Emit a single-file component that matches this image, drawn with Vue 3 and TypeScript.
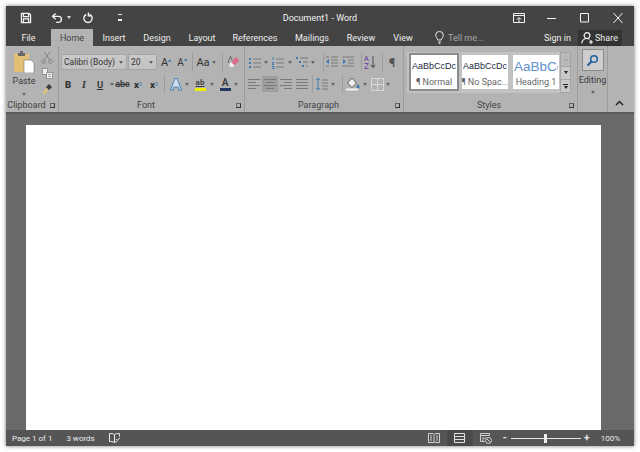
<script setup lang="ts">
const tabs = ['Insert', 'Design', 'Layout', 'References', 'Mailings', 'Review', 'View']

// one line of an align icon: start and end x
const aligns = [
  { name: 'left', on: false, lines: [[2, 14], [2, 10], [2, 14], [2, 10]] },
  { name: 'center', on: true, lines: [[2, 14], [4, 12], [2, 14], [4, 12]] },
  { name: 'right', on: false, lines: [[2, 14], [6, 14], [2, 14], [6, 14]] },
  { name: 'justify', on: false, lines: [[2, 14], [2, 14], [2, 14], [2, 14]] },
]

const styles = [
  { name: 'Normal', label: '¶ Normal', sample: 'AaBbCcDc', heading: false },
  { name: 'nospace', label: '¶ No Spac...', sample: 'AaBbCcDc', heading: false },
  { name: 'heading', label: 'Heading 1', sample: 'AaBbCc', heading: true },
]
</script>

<template>
  <div class="window">
    <header class="titlebar">
      <div class="qat">
        <svg class="save" width="12" height="12" viewBox="0 0 14 14" fill="none" stroke="#f2f2f2" stroke-width="1.500">
          <path d="M1.700 1.700h9l1.600 1.600v9H1.700z" />
          <path d="M4 2v3.500h6V2M4 12.200V8h6v4.200" />
        </svg>
        <svg class="undo" width="12" height="12" viewBox="0 0 13 12" fill="none" stroke="#f2f2f2" stroke-width="1.500">
          <path d="M5 1 1.700 4.200 5 7.400M2 4.200h6a3.200 3.200 0 0 1 0 6.600H5.500" />
        </svg>
        <span class="caret caret--light undo-drop"></span>
        <svg class="redo" width="12" height="12" viewBox="0 0 13 13" fill="none" stroke="#f2f2f2" stroke-width="1.500">
          <path d="M8.300 2.700a4.500 4.500 0 1 1-3.600 0" />
          <path d="M7 .6v3.400h3.400" />
        </svg>
        <span class="customize"></span>
      </div>
      <div class="doc-title">Document1 - Word</div>
      <div class="win-controls">
        <svg width="12" height="10" viewBox="0 0 12 10" fill="none" stroke="#f2f2f2">
          <path d="M.5.500h11v9H.5zM.5 2.500h11M6 9V5M4 6.500l2-2 2 2" />
        </svg>
        <svg width="12" height="10" viewBox="0 0 12 10" stroke="#f2f2f2"><path d="M1 5.500h9" /></svg>
        <svg width="12" height="10" viewBox="0 0 12 10" fill="none" stroke="#f2f2f2"><path d="M1.500.500h8v8.500h-8z" /></svg>
        <svg width="12" height="10" viewBox="0 0 12 10" fill="none" stroke="#f2f2f2"><path d="M1.500 0l9 10M10.500 0l-9 10" /></svg>
      </div>
    </header>

    <nav class="tabs">
      <span class="tab tab--file">File</span>
      <span class="tab tab--home">Home</span>
      <span v-for="tab in tabs" :key="tab" class="tab" :class="'tab--' + tab.toLowerCase()">{{ tab }}</span>
      <svg class="bulb" width="9" height="13" viewBox="0 0 9 13" fill="none" stroke="#e6e6e6">
        <path d="M2.800 9C2.500 7 .7 6.500.7 4.200a3.800 3.800 0 0 1 7.600 0C8.300 6.500 6.500 7 6.200 9zM3 11h3M3.800 12.500h1.400" />
      </svg>
      <span class="tell">Tell me...</span>
      <span class="signin">Sign in</span>
      <span class="share">
        <svg width="12" height="12" viewBox="0 0 12 12" fill="none" stroke="#f5f5f5" stroke-width="1.200">
          <circle cx="6" cy="3.600" r="2.900" />
          <path d="M.7 11.500c.4-3 2.400-5 5.300-5 1 0 1.800.3 2.500.7M8 10h4M10 8v4" />
        </svg>
        Share
      </span>
    </nav>

    <section class="ribbon">
      <div class="group group--clipboard">
        <div class="group__body clip">
          <div class="paste">
            <svg width="22" height="22" viewBox="0 0 22 22">
              <path d="M1 3h15v18H1z" fill="#e3bf73" />
              <path d="M5 2h7v3H5z" fill="#666" />
              <path d="M7 0h3v3H7z" fill="#666" />
              <path d="M11 9h7l3 3v10H11z" fill="#fff" stroke="#777" stroke-width=".6" />
            </svg>
            <span class="paste__label">Paste</span>
            <span class="caret"></span>
          </div>
          <div class="clip__small">
            <svg width="12" height="13" viewBox="0 0 12 13" fill="none" stroke="#858585">
              <path d="M3 1l6 8M9 1 3 9" />
              <circle cx="2.500" cy="10.500" r="1.800" />
              <circle cx="9.500" cy="10.500" r="1.800" />
            </svg>
            <svg width="11" height="11" viewBox="0 0 11 11" fill="#f1f1f1" stroke="#7a7a7a" stroke-width=".7">
              <path d="M.5.500h5v6h-5z" />
              <path d="M4.500 4.500h6v6h-6z" />
              <path d="M6 6.500h3M6 8.500h3" />
            </svg>
            <svg width="12" height="12" viewBox="0 0 12 12">
              <path d="M5 4 8 1l3 3-3 3z" fill="#3c3c3c" />
              <path d="M5.500 5 7 7 5 10 1 11z" fill="#e3bf73" />
            </svg>
          </div>
        </div>
        <div class="group__label"><span>Clipboard</span><i class="launcher"></i></div>
      </div>

      <div class="group group--font">
        <div class="group__body">
          <div class="row">
            <div class="combo combo--family"><span>Calibri (Body)</span><i class="caret"></i></div>
            <div class="combo combo--size"><span>20</span><i class="caret"></i></div>
            <span class="tool tool--text ml1">A<sup class="tick">▴</sup></span>
            <span class="tool tool--text tool--small">A<sup class="tick">▾</sup></span>
            <span class="sep ml2"></span>
            <span class="tool tool--text ml2">Aa</span>
            <span class="caret-cell"><i class="caret"></i></span>
            <span class="sep ml5"></span>
            <span class="tool ml2 tool--wide">
              <svg width="14" height="14" viewBox="0 0 14 14">
                <path d="M5 7l5-5 3.500 3.500-5 5z" fill="#d9708a" />
                <path d="M5 7l3.500 3.500L7 12H4.500L3 10.500z" fill="#eee" />
                <path d="M2 8 4.500 1 6 5" fill="none" stroke="#666" />
              </svg>
            </span>
          </div>
          <div class="row">
            <span class="tool tool--fmt"><b>B</b></span>
            <span class="tool tool--fmt"><i class="serif-i">I</i></span>
            <span class="tool tool--fmt"><u>U</u></span>
            <span class="caret-cell ml1"><i class="caret"></i></span>
            <span class="tool tool--abc"><s>abc</s></span>
            <span class="tool tool--fmt"><b>x</b><sub class="script">2</sub></span>
            <span class="tool tool--fmt"><b>x</b><sup class="script">2</sup></span>
            <span class="sep ml2"></span>
            <span class="tool ml3">
              <svg width="14" height="14" viewBox="0 0 14 14" fill="#cfdff0" stroke="#5a86b5" stroke-width="1.100">
                <path d="M5.800 1.500h2.400L12.500 13H10L9 10H5l-1 3H1.500z" />
              </svg>
            </span>
            <span class="caret-cell"><i class="caret"></i></span>
            <span class="tool ml2 mark">
              <span class="mark__text">ab</span>
              <span class="mark__bar mark__bar--yellow"></span>
            </span>
            <span class="caret-cell ml1"><i class="caret"></i></span>
            <span class="tool ml2 mark">
              <span class="mark__text mark__text--a">A</span>
              <span class="mark__bar mark__bar--navy"></span>
            </span>
            <span class="caret-cell"><i class="caret"></i></span>
          </div>
        </div>
        <div class="group__label"><span>Font</span><i class="launcher"></i></div>
      </div>

      <div class="group group--paragraph">
        <div class="group__body">
          <div class="row">
            <span class="tool">
              <svg width="14" height="13" viewBox="0 0 14 13">
                <path d="M1 2h2v2H1zM1 6h2v2H1zM1 10h2v2H1z" fill="#3f78b3" />
                <path d="M5 3h8M5 7h8M5 11h8" stroke="#7a7a7a" />
              </svg>
            </span>
            <span class="caret-cell"><i class="caret"></i></span>
            <span class="tool ml1">
              <svg width="14" height="13" viewBox="0 0 14 13">
                <path d="M2 1v3M1 6.500h2l-2 2h2M1 10.500h2v2H1" fill="none" stroke="#3f78b3" />
                <path d="M5 3h8M5 7h8M5 11h8" stroke="#7a7a7a" />
              </svg>
            </span>
            <span class="caret-cell ml1"><i class="caret"></i></span>
            <span class="tool ml1">
              <svg width="14" height="13" viewBox="0 0 14 13">
                <path d="M1 1h2v2H1zM4 5h2v2H4zM7 9h2v2H7z" fill="#3f78b3" />
                <path d="M5 2h8M8 6h5M11 10h2" stroke="#7a7a7a" />
              </svg>
            </span>
            <span class="caret-cell"><i class="caret"></i></span>
            <span class="sep ml7"></span>
            <span class="tool">
              <svg width="14" height="12" viewBox="0 0 14 12">
                <path d="M6 1h7M6 4h7M6 7h7M6 10h7M1 1h3M1 10h3" stroke="#7a7a7a" />
                <path d="M1 5.500 4 3v5z" fill="#3f78b3" />
              </svg>
            </span>
            <span class="tool">
              <svg width="14" height="12" viewBox="0 0 14 12">
                <path d="M1 1h12M7 4h6M7 7h6M1 10h12" stroke="#7a7a7a" />
                <path d="M5 5.500 2 3v5z" fill="#3f78b3" />
              </svg>
            </span>
            <span class="sep ml5"></span>
            <span class="tool">
              <svg width="14" height="14" viewBox="0 0 14 14" fill="none">
                <path d="M1.500 6 3.500 1l2 5M2.200 4.300h2.600" stroke="#7a4ea3" />
                <path d="M1.500 8.500h4l-4 5h4" stroke="#7a4ea3" />
                <path d="M10 1v11M7.800 10l2.200 2.500 2.200-2.500" stroke="#555" stroke-width="1.100" />
              </svg>
            </span>
            <span class="sep ml4"></span>
            <span class="tool ml1 pilcrow">¶</span>
          </div>
          <div class="row row--aligns">
            <span v-for="a in aligns" :key="a.name" class="tool" :class="{ 'tool--on': a.on }">
              <svg width="14" height="12" viewBox="1 0 14 12" stroke="#7a7a7a">
                <path v-for="(l, i) in a.lines" :key="i" :d="`M${l[0]} ${i * 3 + 1.500}H${l[1]}`" />
              </svg>
            </span>
            <span class="sep ml2"></span>
            <span class="tool ml1">
              <svg width="14" height="14" viewBox="0 0 14 14" fill="none">
                <path d="M3 1v12M1 3l2-2 2 2M1 11l2 2 2-2" stroke="#3f78b3" />
                <path d="M7 3h6M7 6h6M7 9h6M7 12h6" stroke="#7a7a7a" />
              </svg>
            </span>
            <span class="caret-cell"><i class="caret"></i></span>
            <span class="sep ml6"></span>
            <span class="tool ml2">
              <svg width="15" height="14" viewBox="0 0 15 14">
                <path d="M6 1 1.500 6 6 10.500 10.500 6z" fill="#f1f1f1" stroke="#555" />
                <path d="M12 7c1 1.500 1.500 2 1.500 2.800a1.500 1.500 0 0 1-3 0c0-.8.500-1.300 1.500-2.800z" fill="#3f78b3" />
                <path d="M0 12.500h12" stroke="#f1f1f1" stroke-width="2" />
              </svg>
            </span>
            <span class="caret-cell ml1"><i class="caret"></i></span>
            <span class="tool ml1">
              <svg width="13" height="13" viewBox="0 0 13 13" fill="none" stroke="#e6e6e6" stroke-dasharray="2 1">
                <path d="M.5.500h12v12H.5zM6.500.500v12M.5 6.500h12" />
              </svg>
            </span>
            <span class="caret-cell"><i class="caret"></i></span>
          </div>
        </div>
        <div class="group__label"><span>Paragraph</span><i class="launcher"></i></div>
      </div>

      <div class="group group--styles">
        <div class="group__body">
          <div class="gallery">
            <div class="gallery__items">
              <div
                v-for="(s, i) in styles"
                :key="s.name"
                class="style"
                :class="{ 'style--on': i === 0 }"
              >
                <span class="style__sample" :class="{ 'style__sample--heading': s.heading }">{{ s.sample }}</span>
                <span class="style__label">{{ s.label }}</span>
              </div>
            </div>
            <div class="gallery__scroll">
              <span class="scroll-btn scroll-btn--up"><i class="caret caret--up"></i></span>
              <span class="scroll-btn"><i class="caret caret--dark"></i></span>
              <span class="scroll-btn scroll-btn--more"><i class="more-line"></i><i class="caret caret--dark"></i></span>
            </div>
          </div>
        </div>
        <div class="group__label"><span>Styles</span><i class="launcher"></i></div>
      </div>

      <div class="group group--editing">
        <div class="find">
          <svg width="13" height="13" viewBox="0 0 13 13" fill="none" stroke="#1f5e9e" stroke-width="1.500">
            <circle cx="8" cy="5" r="3.300" />
            <path d="M5.500 7.500 1.500 11.500" stroke-width="2" />
          </svg>
        </div>
        <span class="editing__label">Editing</span>
        <span class="caret"></span>
      </div>

      <div class="collapse">
        <svg width="9" height="6" viewBox="0 0 9 6" fill="none" stroke="#222" stroke-width="1.500">
          <path d="M1 5l3.500-3.500L8 5" />
        </svg>
      </div>
    </section>

    <main class="workspace">
      <div class="page"></div>
    </main>

    <footer class="statusbar">
      <span class="status-text">Page 1 of 1</span>
      <span class="status-text words">3 words</span>
      <svg class="proof" width="11" height="10" viewBox="0 0 11 10" fill="none" stroke="#ececec">
        <path d="M5.500 1.500C4.500.7 2 .5.500.5v8c1.500 0 4 .2 5 1 .6-.5 1.500-.8 2.500-.9M5.500 1.500v8M5.500 1.500C6.500.7 9 .5 10.500.5v3M7 6l1.500 1.500 2.500-3" />
      </svg>
      <div class="views">
        <svg width="12" height="10" viewBox="0 0 12 10" fill="none" stroke="#d0d0d0">
          <path d="M.5.500h4.500l1 1 1-1h4.500v9H7l-1-.5-1 .5H.5zM6 1.500V9M2 3h2M2 5h2M2 7h2M8 3h2M8 5h2M8 7h2" />
        </svg>
        <span class="view view--on">
          <svg width="11" height="10" viewBox="0 0 11 10" fill="none" stroke="#e0e0e0">
            <path d="M.5.500h10v9H.5zM.5 3.500h10M.5 6.500h10" />
          </svg>
        </span>
        <svg width="12" height="11" viewBox="0 0 12 11" fill="none" stroke="#d0d0d0">
          <path d="M.5.500h9v2h-9zM.5 2.500v6h4M2 5h4M2 7h2" />
          <circle cx="8.500" cy="7.500" r="3" />
          <path d="M6.500 5.500l4 4" />
        </svg>
      </div>
      <div class="zoom">
        <span class="zoom__btn">-</span>
        <div class="slider"><i class="slider__thumb"></i></div>
        <span class="zoom__btn">+</span>
      </div>
      <span class="status-text percent">100%</span>
    </footer>
  </div>
</template>

<style>
html,
body {
  margin: 0;
  background: #fff;
}
</style>

<style scoped>
.window {
  width: 628px;
  height: 440px;
  margin: 6px;
  display: flex;
  flex-direction: column;
  font-family: Roboto, 'Liberation Sans', sans-serif;
  font-size: 9px;
  color: #3c3c3c;
  box-shadow: 0 0 4px rgba(0, 0, 0, 0.55);
  overflow: hidden;
}

/* title bar */
.titlebar {
  height: 23px;
  background: #444;
  display: flex;
  align-items: center;
  position: relative;
  flex: none;
}
.qat {
  display: flex;
  align-items: center;
  width: 240px;
}
.save {
  margin-left: 14px;
}
.undo {
  margin-left: 19px;
}
.undo-drop {
  margin-left: 4px;
}
.redo {
  margin-left: 11px;
}
.customize {
  width: 4px;
  height: 4px;
  margin-left: 24px;
  border-top: 1px solid #eee;
  border-bottom: 2px solid #eee;
}
.doc-title {
  width: 148px;
  text-align: center;
  color: #f2f2f2;
  font-size: 9px;
}
.win-controls {
  display: flex;
  align-items: center;
  gap: 21px;
  margin-left: 119px;
}

/* tabs */
.tabs {
  height: 17px;
  background: #444;
  display: flex;
  align-items: stretch;
  position: relative;
  flex: none;
  color: #eee;
}
.tab {
  display: flex;
  align-items: center;
  justify-content: center;
  flex: none;
}
.tab--file {
  width: 45px;
}
.tab--home {
  width: 42px;
  background: #b3b3b3;
  color: #444;
}
.tab--insert {
  width: 42px;
}
.tab--design {
  width: 44px;
}
.tab--layout {
  width: 46px;
}
.tab--references {
  width: 60px;
}
.tab--mailings {
  width: 54px;
}
.tab--review {
  width: 44px;
}
.tab--view {
  width: 40px;
}
.bulb {
  margin: 2px 0 0 12px;
}
.tell {
  margin-left: 4px;
  width: 96px;
  align-self: center;
  color: #a6a6a6;
}
.signin {
  align-self: center;
  width: 34px;
}
.share {
  display: flex;
  align-items: center;
  gap: 2px;
  width: 44px;
  margin: 1px 0 0 0;
  padding-left: 3px;
  box-sizing: border-box;
  background: #333;
}

/* ribbon */
.ribbon {
  height: 68px;
  display: flex;
  flex: none;
  background: #b3b3b3;
  border-bottom: 2px solid #5a5a5a;
  box-sizing: border-box;
}
.group {
  height: 100%;
  flex: none;
  display: flex;
  flex-direction: column;
  box-sizing: border-box;
  border-right: 1px solid #9c9c9c;
}
.group--clipboard {
  width: 53px;
}
.group--font {
  width: 186px;
}
.group--paragraph {
  width: 159px;
}
.group--styles {
  width: 174px;
}
.group--editing {
  width: 30px;
  align-items: center;
}
.group__body {
  height: 53px;
  padding-top: 5px;
  box-sizing: border-box;
  flex: none;
}
.group__label {
  display: flex;
  align-items: center;
  height: 12px;
  color: #444;
}
.group__label > span {
  flex: 1;
  text-align: center;
}
.group--styles .group__label {
  padding-left: 8px;
}
.launcher {
  width: 5px;
  height: 5px;
  margin: 0 3px;
  border-left: 1px solid #666;
  border-top: 1px solid #666;
  border-bottom: 1px solid #333;
  border-right: 1px solid #333;
  box-sizing: border-box;
  flex: none;
}
.row {
  display: flex;
  align-items: center;
  height: 22px;
  padding-left: 1px;
}
.group--paragraph .row {
  padding-left: 2px;
}
.group--paragraph .row--aligns {
  padding-left: 1px;
}
.tool {
  width: 16px;
  height: 16px;
  display: flex;
  align-items: center;
  justify-content: center;
  flex: none;
}
.tool--on {
  background: #9e9e9e;
}
.tool--text {
  font-size: 11px;
  color: #333;
}
.tool--small {
  font-size: 10px;
}
.tool--fmt {
  font-size: 9.500px;
  color: #333;
  font-weight: 600;
}
.tool--abc {
  width: 15px;
  font-size: 9px;
  font-weight: 600;
}
.tool--wide {
  margin-left: 3px;
}
.serif-i {
  font-family: 'Liberation Serif', serif;
  font-weight: 700;
  font-size: 10px;
}
.tick {
  font-size: 6px;
  line-height: 1;
  color: #3f78b3;
  margin-bottom: 5px;
}
.script {
  font-size: 5px;
  color: #4f7fb0;
  line-height: 1;
}
.pilcrow {
  font-size: 13px;
  font-weight: 700;
  color: #555;
}
.caret {
  display: block;
  width: 0;
  height: 0;
  border-left: 2.500px solid transparent;
  border-right: 2.500px solid transparent;
  border-top: 3px solid #666;
}
.caret--light {
  border-top-color: #ddd;
}
.caret--dark {
  border-top-color: #222;
}
.caret--up {
  border-top: 0;
  border-bottom: 3px solid #a5a5a5;
}
.caret-cell {
  width: 6px;
  display: flex;
  justify-content: center;
  flex: none;
}
.sep {
  width: 1px;
  height: 18px;
  background: #9c9c9c;
  flex: none;
}
.ml1 {
  margin-left: 1px;
}
.ml2 {
  margin-left: 2px;
}
.ml3 {
  margin-left: 3px;
}
.ml4 {
  margin-left: 4px;
}
.ml5 {
  margin-left: 5px;
}
.ml6 {
  margin-left: 6px;
}
.ml7 {
  margin-left: 7px;
}

/* clipboard */
.clip {
  display: flex;
}
.paste {
  width: 32px;
  margin-left: 2px;
  display: flex;
  flex-direction: column;
  align-items: center;
}
.paste__label {
  margin: 2px 0 6px;
  line-height: 12px;
  font-size: 9px;
}
.clip__small {
  width: 14px;
  display: flex;
  flex-direction: column;
  align-items: center;
  gap: 4px;
}

/* font */
.combo {
  height: 16px;
  box-sizing: border-box;
  display: flex;
  align-items: center;
  justify-content: space-between;
  padding: 0 3px 0 2px;
  background: linear-gradient(#c9c9c9, #c2c2c2);
  border: 1px solid #a5a5a5;
  color: #333;
  font-size: 8.500px;
}
.combo--family {
  width: 66px;
  margin-left: 1px;
}
.combo--size {
  width: 29px;
  margin-left: 1px;
}
.mark {
  position: relative;
  flex-direction: column;
}
.mark__text {
  font-size: 8px;
  line-height: 10px;
  font-weight: 600;
  text-decoration: underline;
}
.mark__text--a {
  font-size: 10px;
  text-decoration: none;
}
.mark__bar {
  width: 11px;
  height: 3px;
}
.mark__bar--yellow {
  background: #f0ee00;
}
.mark__bar--navy {
  background: #1f3864;
}

/* styles gallery */
.gallery {
  width: 164px;
  height: 41px;
  margin-left: 3px;
  margin-top: 1px;
  box-sizing: border-box;
  background: #c2c2c2;
  display: flex;
  justify-content: space-between;
}
.gallery__items {
  display: flex;
  gap: 5px;
  padding: 3px 0 0 4px;
}
.style {
  width: 46px;
  height: 34px;
  background: #fff;
  display: flex;
  flex-direction: column;
  align-items: center;
  overflow: hidden;
  box-sizing: border-box;
}
.style--on {
  outline: 2px solid #8c8c8c;
}
.style__sample {
  height: 22px;
  width: 44px;
  display: flex;
  align-items: center;
  justify-content: center;
  overflow: hidden;
  white-space: nowrap;
  font-family: 'Liberation Sans', sans-serif;
  font-size: 9px;
  color: #1c2a44;
}
.style__sample--heading {
  justify-content: flex-start;
  font-size: 13.500px;
  color: #5f90cf;
}
.style__label {
  color: #666;
  line-height: 11px;
  white-space: nowrap;
}
.gallery__scroll {
  width: 11px;
  display: flex;
  flex-direction: column;
}
.scroll-btn {
  height: 13.670px;
  background: #c9c9c9;
  border: 1px solid #a5a5a5;
  border-bottom: 0;
  box-sizing: border-box;
  display: flex;
  flex-direction: column;
  align-items: center;
  justify-content: center;
}
.scroll-btn--up {
  background: #b9b9b9;
}
.scroll-btn--more {
  gap: 1px;
  border-bottom: 1px solid #a5a5a5;
}
.more-line {
  width: 5px;
  height: 1px;
  background: #222;
}

/* editing */
.find {
  width: 22px;
  height: 22px;
  box-sizing: border-box;
  margin-top: 3px;
  background: #cdcdcd;
  border: 1px solid #8a8a8a;
  display: flex;
  align-items: center;
  justify-content: center;
  flex: none;
}
.editing__label {
  margin: 3px 0 5px;
  font-size: 9px;
  line-height: 12px;
}
.collapse {
  flex: 1;
  display: flex;
  align-items: flex-end;
  justify-content: center;
  padding: 0 3px 6px 0;
}

/* document */
.workspace {
  flex: 1;
  min-height: 0;
  background: #6a6a6a;
  padding: 11px 33px 0 20px;
  display: flex;
}
.page {
  flex: 1;
  background: #fff;
}

/* status bar */
.statusbar {
  height: 16px;
  flex: none;
  background: #555;
  display: flex;
  align-items: center;
  color: #ececec;
}
.status-text {
  font-size: 8px;
  flex: none;
}
.statusbar > .status-text:first-child {
  margin-left: 6px;
}
.words {
  margin-left: 14px;
}
.proof {
  margin-left: 14px;
}
.views {
  display: flex;
  align-items: center;
  margin-left: auto;
  gap: 7px;
}
.view {
  width: 26px;
  height: 16px;
  display: flex;
  align-items: center;
  justify-content: center;
}
.view--on {
  background: #4a4a4a;
}
.zoom {
  display: flex;
  align-items: center;
  margin-left: 10px;
  gap: 3px;
}
.zoom__btn {
  width: 6px;
  text-align: center;
  font-size: 10px;
  font-weight: 700;
  line-height: 10px;
}
.slider {
  width: 70px;
  height: 1px;
  background: #e6e6e6;
  display: flex;
  align-items: center;
  justify-content: center;
}
.slider__thumb {
  width: 3px;
  height: 9px;
  background: #eee;
}
.percent {
  margin: 0 14px 0 11px;
}
</style>
